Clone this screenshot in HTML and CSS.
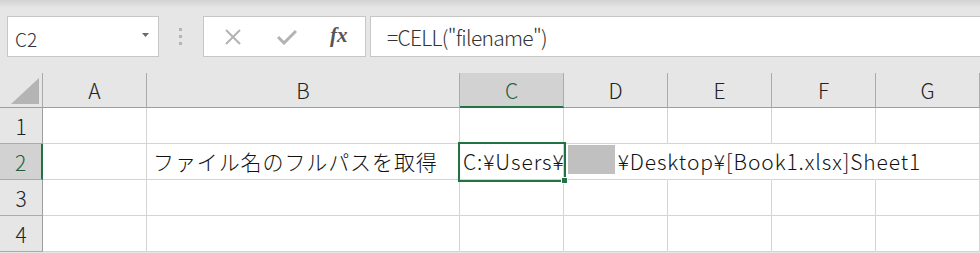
FILE: index.html
```html
<!DOCTYPE html>
<html lang="ja">

<head>
    <meta charset="UTF-8">
    <title>CELL関数</title>
    <link rel="stylesheet" href="styles.css">
</head>

<body>

    <div class="ribbon-edge"></div>

    <div class="formula-row">
        <div class="name-box">
            <span class="name-text">C2</span>
            <svg class="name-arrow" width="7" height="4" viewBox="0 0 7 4"><path d="M0 0 H7 L3.5 4 Z" fill="#6a6a6a"/></svg>
        </div>
        <div class="grip">
            <span></span><span></span><span></span>
        </div>
        <div class="fx-buttons">
            <svg class="btn-icon" width="18" height="16" viewBox="0 0 18 16">
                <path d="M2 1 L16 15 M16 1 L2 15" stroke="#b3b3b3" stroke-width="2" fill="none"/>
            </svg>
            <svg class="btn-icon" width="20" height="16" viewBox="0 0 20 16">
                <path d="M1 8 L7 14 L19 2" stroke="#b3b3b3" stroke-width="3" fill="none"/>
            </svg>
            <span class="fx">fx</span>
        </div>
        <div class="formula-input">=CELL("filename")</div>
    </div>

    <div class="sheet">
        <!-- 見出し -->
        <div class="corner"><div class="corner-tri"></div></div>
        <div class="hd">A</div>
        <div class="hd">B</div>
        <div class="hd hd-active">C</div>
        <div class="hd">D</div>
        <div class="hd">E</div>
        <div class="hd">F</div>
        <div class="hd">G</div>

        <!-- 1 -->
        <div class="rh">1</div>
        <div class="cell"></div>
        <div class="cell"></div>
        <div class="cell"></div>
        <div class="cell"></div>
        <div class="cell"></div>
        <div class="cell"></div>
        <div class="cell"></div>

        <!-- 2 -->
        <div class="rh rh-active">2</div>
        <div class="cell"></div>
        <div class="cell text-cell jp">ファイル名のフルパスを取得</div>
        <div class="cell text-cell overflow selected">
            <span>C:¥Users¥<span class="redact"></span>¥Desktop¥[Book1.xlsx]Sheet1</span>
            <div class="fill-handle"></div>
        </div>
        <div class="cell no-right"></div>
        <div class="cell no-right"></div>
        <div class="cell no-right"></div>
        <div class="cell"></div>

        <!-- 3 -->
        <div class="rh">3</div>
        <div class="cell"></div>
        <div class="cell"></div>
        <div class="cell"></div>
        <div class="cell"></div>
        <div class="cell"></div>
        <div class="cell"></div>
        <div class="cell"></div>

        <!-- 4 -->
        <div class="rh">4</div>
        <div class="cell"></div>
        <div class="cell"></div>
        <div class="cell"></div>
        <div class="cell"></div>
        <div class="cell"></div>
        <div class="cell"></div>
        <div class="cell"></div>
    </div>

</body>

</html>
```

FILE: styles.css
```css
* {
    margin: 0;
    padding: 0;
    box-sizing: border-box;
}

body {
    background-color: #e6e6e6;
    font-family: 'Noto Sans CJK JP', sans-serif;
    font-weight: 300;
    color: #222;
    width: 980px;
    overflow: hidden;
}

.ribbon-edge {
    height: 8px;
    background: linear-gradient(#d2d2d2, #e6e6e6);
}

.formula-row {
    display: flex;
    align-items: center;
    height: 41px;
    margin-top: 8px;
}

.name-box {
    display: flex;
    align-items: center;
    justify-content: space-between;
    width: 152px;
    height: 41px;
    margin-left: 7px;
    padding: 0 9px 0 7px;
    background-color: #fff;
    border: 1px solid #c6c6c6;
}

.name-text {
    font-size: 19px;
    color: #333;
    margin-top: 4px;
}

.name-arrow {
    margin-top: -3px;
}

.grip {
    display: flex;
    flex-direction: column;
    gap: 4px;
    margin: 0 21px 0 20px;
}

.grip span {
    width: 3px;
    height: 3px;
    background-color: #b5b5b5;
}

.fx-buttons {
    display: flex;
    align-items: center;
    width: 163px;
    height: 41px;
    padding-left: 20px;
    background-color: #fff;
    border: 1px solid #c6c6c6;
}

.btn-icon {
    margin-right: 35px;
}

.btn-icon + .btn-icon {
    margin-right: 33px;
}

.fx {
    font-family: 'Liberation Serif', serif;
    font-style: italic;
    font-weight: bold;
    font-size: 21px;
    color: #555;
    margin-top: -2px;
}

.formula-input {
    flex: 1;
    height: 41px;
    margin-left: 4px;
    padding-left: 16px;
    padding-top: 5px;
    background-color: #fff;
    border: 1px solid #c6c6c6;
    border-right: none;
    font-size: 21px;
    letter-spacing: -0.7px;
    color: #333;
    white-space: nowrap;
}

.sheet {
    display: grid;
    grid-template-columns: 43px 104px 313px 104px 104px 104px 104px 104px;
    grid-template-rows: 35px 36px 36px 36px 36px;
    margin-top: 16px;
    background-color: #fff;
}

.corner {
    position: relative;
    background-color: #e6e6e6;
    border-right: 1px solid #ababab;
    border-bottom: 1px solid #9e9e9e;
}

.corner-tri {
    position: absolute;
    right: 3px;
    bottom: 3px;
    width: 0;
    height: 0;
    border-left: 28px solid transparent;
    border-bottom: 26px solid #b4b4b4;
}

.hd {
    display: flex;
    align-items: center;
    justify-content: center;
    background-color: #e6e6e6;
    border-right: 1px solid #ababab;
    border-bottom: 1px solid #9e9e9e;
    font-size: 21px;
    color: #222;
}

.hd-active {
    background-color: #d2d2d2;
    border-bottom: 2px solid #217346;
    color: #1e5e3a;
}

.rh {
    display: flex;
    align-items: center;
    justify-content: center;
    background-color: #e6e6e6;
    border-right: 1px solid #9e9e9e;
    border-bottom: 1px solid #ababab;
    font-size: 21px;
    color: #222;
}

.rh-active {
    background-color: #d2d2d2;
    border-right: 2px solid #217346;
    color: #1e5e3a;
}

.cell {
    border-right: 1px solid #d4d4d4;
    border-bottom: 1px solid #d4d4d4;
}

.text-cell {
    display: flex;
    align-items: flex-end;
    padding: 0 0 3px 6px;
    font-size: 21px;
    letter-spacing: 0.9px;
    color: #111;
    white-space: nowrap;
}

.jp {
    letter-spacing: 0.9px;
}

.overflow {
    position: relative;
    z-index: 1;
    padding-left: 3px;
}

.selected {
    outline: 2px solid #217346;
    outline-offset: 0;
}

.no-right {
    border-right-color: transparent;
}

.redact {
    display: inline-block;
    width: 47px;
    height: 29px;
    margin: 0 3px -4px 3px;
    background-color: #c0c0c0;
}

.fill-handle {
    position: absolute;
    right: -5px;
    bottom: -5px;
    width: 7px;
    height: 7px;
    background-color: #217346;
    border: 1px solid #fff;
}
```
